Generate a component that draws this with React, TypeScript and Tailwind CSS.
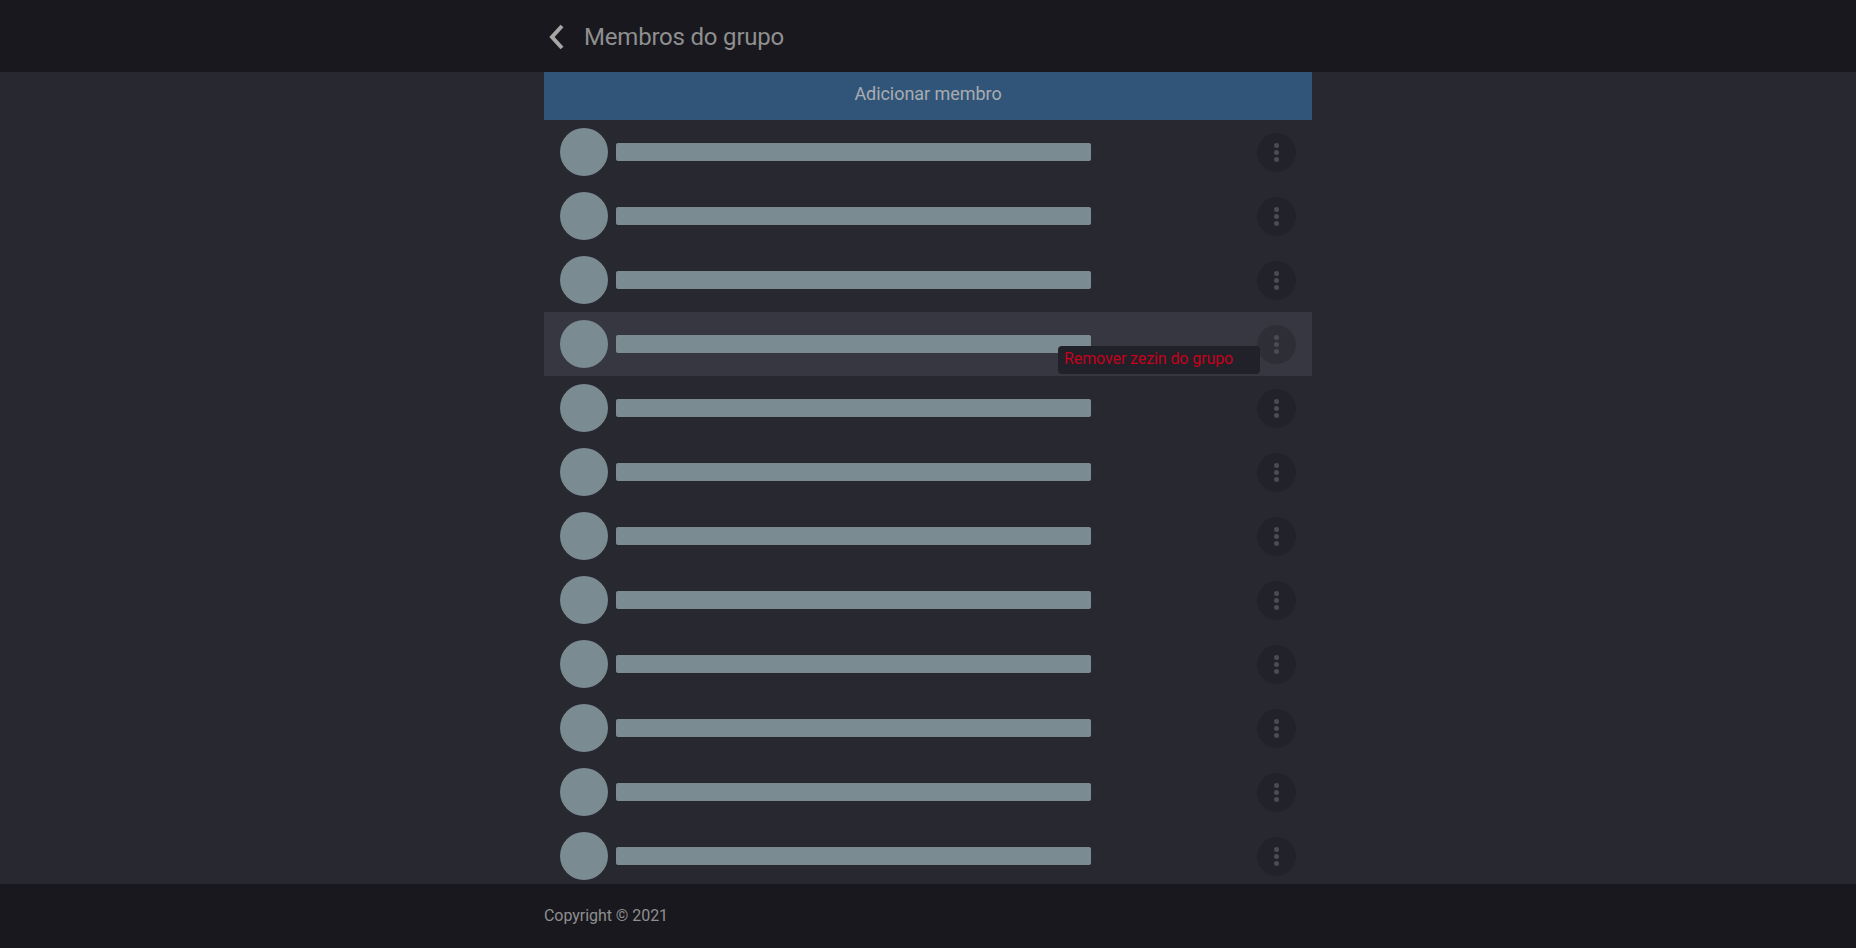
const rows = Array.from({ length: 12 }, (_, i) => i);

function MemberRow({ active }: { active: boolean }) {
  return (
    <div className={`relative flex h-16 shrink-0 items-center pl-4 pr-4 ${active ? "bg-[#373741]" : ""}`}>
      <div className="h-12 w-12 shrink-0 rounded-full bg-[#7b8b92]" />
      <div className="ml-2 h-[18px] w-[475px] rounded-[2px] bg-[#7b8b92]" />
      <button className="ml-auto flex h-[39px] w-[39px] flex-col items-center justify-center gap-[2px] rounded-full bg-black/15">
        <span className="h-[5px] w-[5px] rounded-full bg-[#4b4b55]" />
        <span className="h-[5px] w-[5px] rounded-full bg-[#4b4b55]" />
        <span className="h-[5px] w-[5px] rounded-full bg-[#4b4b55]" />
      </button>
      {active && (
        <div className="absolute left-[514px] top-[34px] flex h-7 w-[202px] items-center rounded-[4px] bg-[#21212a] pb-[2px] pl-[6px] text-base tracking-[-0.1px] text-[#c5001a]">
          Remover zezin do grupo
        </div>
      )}
    </div>
  );
}

export default function App() {
  return (
    <div className="flex h-screen flex-col overflow-hidden bg-[#282831] font-['Roboto',sans-serif]">
      <header className="flex h-[72px] shrink-0 justify-center bg-[#18181e]">
        <div className="flex w-[768px] items-center pt-[2px]">
          <svg viewBox="0 0 16 26" className="ml-[4px] h-[26px] w-4 text-[#a6a6a6]" fill="none" stroke="currentColor" strokeWidth="4">
            <path d="M14 2 L4 13 L14 24" />
          </svg>
          <h1 className="ml-5 text-2xl font-normal tracking-[-0.2px] text-[#8f8f8f]">Membros do grupo</h1>
        </div>
      </header>
      <main className="flex min-h-0 flex-1 justify-center overflow-hidden">
        <div className="flex w-[768px] flex-col">
          <button className="h-12 shrink-0 bg-[#315578] pb-1 text-lg tracking-[-0.05px] text-[#a9acb0]">Adicionar membro</button>
          {rows.map((i) => (
            <MemberRow key={i} active={i === 3} />
          ))}
        </div>
      </main>
      <footer className="flex h-16 shrink-0 justify-center bg-[#18181e]">
        <div className="flex w-[768px] items-center text-base tracking-[-0.05px] text-[#8f8f8f]">Copyright © 2021</div>
      </footer>
    </div>
  );
}
